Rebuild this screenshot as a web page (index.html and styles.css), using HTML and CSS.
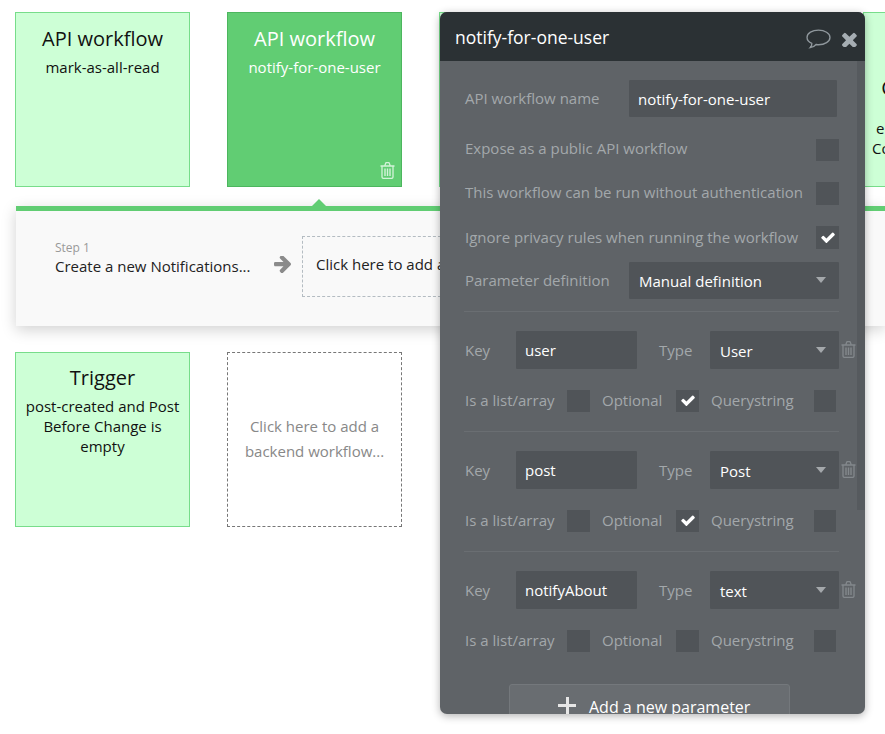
FILE: index.html
```html
<!DOCTYPE html>
<html lang="en">
<head>
<meta charset="utf-8">
<title>notify-for-one-user</title>
<link rel="stylesheet" href="styles.css">
</head>
<body>
<svg class="defs" aria-hidden="true">
  <symbol id="i-trash" viewBox="0 0 15 17">
    <path d="M.5 4h14M4.800 3.800 5.700 1.200q.2-.6.9-.6h1.800q.7 0 .9.6l.9 2.600M2 4v11q0 1.400 1.500 1.400h8q1.500 0 1.500-1.400V4" fill="none" stroke="currentColor" stroke-width="1.300"/>
    <path d="M5 6.500v7.500M7.500 6.500v7.500M10 6.500v7.500" fill="none" stroke="currentColor" stroke-width="1.400"/>
  </symbol>
  <symbol id="i-check" viewBox="100 300 1592 1200">
    <path fill="currentColor" d="M1671 566q0 40-28 68l-724 724-136 136q-28 28-68 28t-68-28l-136-136-362-362q-28-28-28-68t28-68l136-136q28-28 68-28t68 28l294 295 656-657q28-28 68-28t68 28l136 136q28 28 28 68z"/>
  </symbol>
</svg>

<main class="canvas">
  <section class="card-row">
    <article class="card">
      <h2 class="card-title">API workflow</h2>
      <p class="card-sub">mark-as-all-read</p>
    </article>
    <article class="card card-selected">
      <h2 class="card-title">API workflow</h2>
      <p class="card-sub">notify-for-one-user</p>
      <svg class="card-trash"><use href="#i-trash"/></svg>
    </article>
    <article class="card"></article>
    <article class="card"></article>
    <article class="card card-far">
      <h2 class="card-title">Custom events</h2>
      <p class="card-sub">email-sent-to-all-user<br>Content was published</p>
    </article>
  </section>

  <section class="steps">
    <span class="notch"></span>
    <div class="step">
      <span class="step-num">Step 1</span>
      <span class="step-name">Create a new Notifications...</span>
    </div>
    <svg class="step-arrow" viewBox="128 256 1472 1472"><path fill="currentColor" d="M1600 960q0 54-37 91l-651 651q-39 37-91 37-51 0-90-37l-75-75q-38-38-38-91t38-91l293-293h-704q-52 0-84.5-37.5t-32.5-90.5v-128q0-53 32.5-90.5t84.5-37.5h704l-293-294q-38-36-38-90t38-90l75-75q38-38 90-38 53 0 91 38l651 651q37 35 37 90z"/></svg>
    <div class="add-step">Click here to add an action...</div>
  </section>

  <section class="card-row card-row-low">
    <article class="card">
      <h2 class="card-title card-title-tight">Trigger</h2>
      <p class="card-sub">post-created and Post Before Change is empty</p>
    </article>
    <article class="card card-add">Click here to add a backend workflow...</article>
  </section>
</main>

<aside class="panel">
  <header class="panel-head">
    <h1 class="panel-title">notify-for-one-user</h1>
    <svg class="icon-chat" viewBox="0 0 24 20"><path d="M12 1C6 1 1 3.900 1 8c0 2.600 2 4.600 4.600 5.800.2 1.500-.6 3-1.600 4 2.200-.3 4.400-1.500 5.700-3 .8.100 1.500.2 2.300.2 6 0 11-3 11-7S18 1 12 1z" fill="none" stroke="currentColor" stroke-width="1.300"/></svg>
    <svg class="icon-close" viewBox="110 300 1200 1200"><path fill="currentColor" d="M1298 1322q0 40-28 68l-136 136q-28 28-68 28t-68-28l-294-294-294 294q-28 28-68 28t-68-28l-136-136q-28-28-28-68t28-68l294-294-294-294q-28-28-28-68t28-68l136-136q28-28 68-28t68 28l294 294 294-294q28-28 68-28t68 28l136 136q28 28 28 68t-28 68l-294 294 294 294q28 28 28 68z"/></svg>
  </header>
  <div class="panel-body">
    <span class="scrollbar"></span>
    <div class="form-row form-row-name">
      <label class="lbl lbl-wide lbl-up">API workflow name</label>
      <div class="field field-name">notify-for-one-user</div>
    </div>
    <div class="check-list">
      <div class="check-line"><label class="lbl lbl-up2">Expose as a public API workflow</label><span class="box"></span></div>
      <div class="check-line"><label class="lbl lbl-up2">This workflow can be run without authentication</label><span class="box"></span></div>
      <div class="check-line"><label class="lbl">Ignore privacy rules when running the workflow</label><span class="box"><svg class="tick"><use href="#i-check"/></svg></span></div>
    </div>
    <div class="form-row form-row-def">
      <label class="lbl lbl-wide">Parameter definition</label>
      <div class="field select select-def">Manual definition<i class="caret"></i></div>
    </div>

    <div class="param">
      <div class="key-row">
        <label class="lbl lbl-key">Key</label>
        <div class="field field-key">user</div>
        <label class="lbl lbl-type">Type</label>
        <div class="field select select-type">User<i class="caret"></i></div>
        <svg class="row-trash"><use href="#i-trash"/></svg>
      </div>
      <div class="opt-row">
        <label class="lbl lbl-list">Is a list/array</label><span class="box box-opt"></span>
        <label class="lbl lbl-opt">Optional</label><span class="box box-opt"><svg class="tick"><use href="#i-check"/></svg></span>
        <label class="lbl lbl-query">Querystring</label><span class="box box-opt box-query"></span>
      </div>
    </div>

    <div class="param">
      <div class="key-row">
        <label class="lbl lbl-key">Key</label>
        <div class="field field-key">post</div>
        <label class="lbl lbl-type">Type</label>
        <div class="field select select-type">Post<i class="caret"></i></div>
        <svg class="row-trash"><use href="#i-trash"/></svg>
      </div>
      <div class="opt-row">
        <label class="lbl lbl-list">Is a list/array</label><span class="box box-opt"></span>
        <label class="lbl lbl-opt">Optional</label><span class="box box-opt"><svg class="tick"><use href="#i-check"/></svg></span>
        <label class="lbl lbl-query">Querystring</label><span class="box box-opt box-query"></span>
      </div>
    </div>

    <div class="param">
      <div class="key-row">
        <label class="lbl lbl-key">Key</label>
        <div class="field field-key">notifyAbout</div>
        <label class="lbl lbl-type">Type</label>
        <div class="field select select-type">text<i class="caret"></i></div>
        <svg class="row-trash"><use href="#i-trash"/></svg>
      </div>
      <div class="opt-row">
        <label class="lbl lbl-list">Is a list/array</label><span class="box box-opt"></span>
        <label class="lbl lbl-opt">Optional</label><span class="box box-opt"></span>
        <label class="lbl lbl-query">Querystring</label><span class="box box-opt box-query"></span>
      </div>
    </div>

    <button class="add-param"><span class="plus"></span>Add a new parameter</button>
  </div>
</aside>
</body>
</html>
```
FILE: styles.css
```css
* { box-sizing: border-box; }
html, body { margin: 0; height: 100%; }
body {
  width: 885px;
  height: 734px;
  overflow: hidden;
  position: relative;
  background: #fff;
  font-family: "Open Sans", "Liberation Sans", sans-serif;
  font-size: 15px;
  color: #111;
}
.defs { position: absolute; width: 0; height: 0; }

.canvas { padding: 12px 0 0 15px; width: 885px; overflow: hidden; }
.card-row { display: flex; gap: 37px; width: 1100px; }
.card-row-low { margin-top: 26px; }
.card {
  flex: none;
  width: 175px;
  height: 175px;
  position: relative;
  background: #cdffd6;
  border: 1px solid #77dd8a;
  text-align: center;
  padding: 0 8px;
}
.card-selected { background: #61cd73; border-color: #4cb65e; color: #fff; }
.card-title { margin: 12px 0 0; font-size: 20px; line-height: 27px; font-weight: 400; }
.card-title-tight { margin-top: 11px; }
.card-sub { margin: 5px 0 0; font-size: 15px; line-height: 20px; }
.card-far .card-title { margin-top: 61px; }
.card-far .card-sub { margin-top: 17px; white-space: nowrap; }
.card-trash { position: absolute; right: 6px; bottom: 7px; width: 15px; height: 17px; color: #d3f3d9; }
.card-add {
  background: #fff;
  border: 1px dashed #777;
  color: #888;
  padding: 61px 14px 0;
  line-height: 25px;
}

.steps {
  margin: 19px 0 0 1px;
  height: 120px;
  width: 869px;
  position: relative;
  display: flex;
  align-items: flex-start;
  background: #f9f9f9;
  border-top: 5px solid #61cd73;
  box-shadow: 0 4px 14px rgba(0, 0, 0, .18);
}
.notch {
  position: absolute;
  left: 295px;
  top: -12px;
  width: 0;
  height: 0;
  border-left: 8px solid transparent;
  border-right: 8px solid transparent;
  border-bottom: 8px solid #61cd73;
}
.step { margin: 29px 0 0 39px; width: 219px; display: flex; flex-direction: column; }
.step-num { font-size: 12px; line-height: 16px; color: #999; }
.step-name { font-size: 15px; line-height: 20px; color: #222; }
.step-arrow { margin-top: 45px; width: 17px; height: 17px; color: #8b8b8b; }
.add-step {
  margin: 25px 0 0 11px;
  flex: none;
  width: 280px;
  height: 61px;
  border: 1px dashed #b4bcc2;
  padding-left: 13px;
  line-height: 55px;
  white-space: nowrap;
  color: #222;
}

.panel {
  position: absolute;
  left: 440px;
  top: 12px;
  width: 425px;
  height: 702px;
  overflow: hidden;
  border-radius: 7px;
  background: #5f6367;
  box-shadow: 0 2px 8px rgba(0, 0, 0, .3);
}
.panel-head {
  height: 49px;
  background: #2b3134;
  display: flex;
  align-items: center;
  padding: 0 8px 0 15px;
}
.panel-title { margin: 0; flex: 1; font-size: 17.5px; font-weight: 400; color: #fff; }
.icon-chat { flex: none; width: 25px; height: 21px; color: #8f979c; margin: 5px 11px 0 0; }
.icon-close { flex: none; width: 15px; height: 15px; color: #a5adb2; margin-top: 5px; }

.panel-body { position: relative; padding: 19px 0 0 25px; }
.scrollbar { position: absolute; right: 0; top: 0; width: 8px; height: 449px; background: #565a5e; }
.lbl { font-size: 15px; line-height: 20px; color: #a3a8ab; white-space: nowrap; }
.lbl-up { margin-bottom: 2px; }
.lbl-up2 { margin-bottom: 4px; }
.lbl-wide { width: 164px; flex: none; }
.form-row { display: flex; align-items: center; }
.form-row-name { height: 37px; }
.form-row-def { height: 37px; margin-top: 13.4px; }
.field {
  flex: none;
  background: #505458;
  border-radius: 1px;
  color: #fff;
  font-size: 15px;
  display: flex;
  align-items: center;
  position: relative;
}
.field-name { width: 208px; height: 37px; padding-left: 9px; }
.select-def { width: 210px; height: 37px; padding-left: 10px; padding-top: 1px; }
.caret {
  position: absolute;
  right: 13px;
  top: 50%;
  margin-top: -3px;
  width: 0;
  height: 0;
  border-left: 5.5px solid transparent;
  border-right: 5.5px solid transparent;
  border-top: 6px solid #a4a8ab;
}
.check-list { display: flex; flex-direction: column; gap: 21px; margin-top: 21.8px; width: 374px; }
.check-line { display: flex; justify-content: space-between; align-items: center; height: 22.6px; }
.box {
  flex: none;
  width: 23px;
  height: 100%;
  background: #505458;
  display: flex;
  align-items: center;
  justify-content: center;
}
.tick { width: 14px; height: 11px; color: #fff; }

.param {
  width: 375px;
  margin-left: -1px;
  padding: 19px 0 19px 1px;
  border-top: 1px solid #6a6e72;
}
.form-row-def + .param { margin-top: 12px; }
.key-row { display: flex; align-items: center; height: 38px; }
.lbl-key { width: 51px; flex: none; }
.field-key { width: 121px; height: 38px; padding-left: 9px; }
.lbl-type { margin-left: 22px; width: 51px; flex: none; }
.select-type { width: 129px; height: 38px; padding-left: 10px; padding-top: 2px; }
.row-trash { flex: none; width: 15px; height: 17px; margin-left: 2px; color: #83888c; }
.opt-row { display: flex; align-items: center; height: 22px; margin-top: 21px; }
.opt-row .lbl { margin-bottom: 2px; }
.box-opt { height: 22px; }
.box-query { width: 22px; }
.lbl-list { width: 102px; flex: none; }
.lbl-opt { width: 74px; flex: none; margin-left: 12px; }
.lbl-query { width: 103px; flex: none; margin-left: 12px; }

.add-param {
  display: flex;
  align-items: center;
  width: 281px;
  height: 46px;
  margin: 13px 0 0 44px;
  padding: 0 0 0 48px;
  border: 1px solid #74787c;
  border-radius: 3px;
  background: #696d71;
  color: #fff;
  font-family: inherit;
  font-size: 16px;
}
.plus {
  width: 18px;
  height: 18px;
  margin: 0 13px 2px 0;
  background:
    linear-gradient(#e6e6e6, #e6e6e6) center / 100% 3px no-repeat,
    linear-gradient(#e6e6e6, #e6e6e6) center / 3px 100% no-repeat;
}
```
